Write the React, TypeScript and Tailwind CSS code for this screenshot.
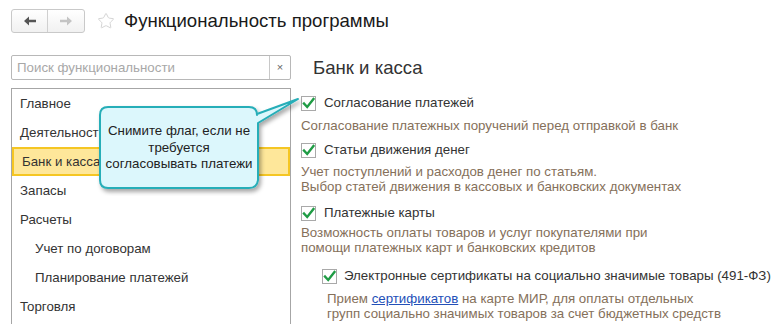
import { Star } from 'lucide-react';

const menu = [
    { title: 'Главное' },
    { title: 'Деятельность' },
    { title: 'Банк и касса', active: true },
    { title: 'Запасы' },
    { title: 'Расчеты' },
    { title: 'Учет по договорам', sub: true },
    { title: 'Планирование платежей', sub: true },
    { title: 'Торговля' },
];

function Check() {
    return (
        <span className="flex h-[15px] w-[15px] shrink-0 items-center justify-center border border-[#a9a9a9] bg-white">
            <svg width="13" height="13" viewBox="0 0 13 13">
                <path d="M2 6.5 L5.2 10 L11.5 2" fill="none" stroke="#1f9c45" strokeWidth="2.4" strokeLinecap="square" />
            </svg>
        </span>
    );
}

function Callout() {
    return (
        <div className="absolute left-[97px] top-[96px] h-[100px] w-[206px]">
            <svg width="206" height="100" className="absolute left-0 top-0">
                <defs>
                    <filter id="sh" x="-10%" y="-10%" width="130%" height="130%">
                        <feDropShadow dx="2" dy="3" stdDeviation="2" floodColor="#000" floodOpacity="0.35" />
                    </filter>
                </defs>
                <path
                    d="M11 11 H152 Q160 11 160 19 V18 L201 3 L161 27 V84 Q160 92 152 92 H11 Q3 92 3 84 V19 Q3 11 11 11 Z"
                    fill="#dcf7fc"
                    stroke="#27aeb8"
                    strokeWidth="2"
                    strokeLinejoin="round"
                    filter="url(#sh)"
                />
            </svg>
            <div className="absolute left-[3px] top-[27px] w-[158px] text-center text-[13.3px] leading-[16.5px] text-[#222]">
                Снимите флаг, если не<br />требуется<br />согласовывать платежи
            </div>
        </div>
    );
}

export default function App() {
    return (
        <div className="relative h-[324px] w-[778px] overflow-hidden bg-white font-['Liberation_Sans',Arial,sans-serif] text-[#333]">
            {/* шапка */}
            <div className="flex h-[42px] items-start pl-[11px] pt-[9px]">
                <div className="flex h-[24px] rounded-[3px] border border-[#c9c9c9] bg-gradient-to-b from-white to-[#f1f1f1]">
                    <button className="flex w-[36px] items-center justify-center border-r border-[#d0d0d0]">
                        <svg width="12" height="10" viewBox="0 0 12 10"><path d="M0 5 L5 0.5 V3.8 H12 V6.2 H5 V9.5 Z" fill="#555" /></svg>
                    </button>
                    <button className="flex w-[36px] items-center justify-center">
                        <svg width="12" height="10" viewBox="0 0 12 10"><path d="M12 5 L7 0.5 V3.8 H0 V6.2 H7 V9.5 Z" fill="#c4c4c4" /></svg>
                    </button>
                </div>
                <Star size={18} strokeWidth={1.2} className="ml-[12px] mt-[3px] text-[#cfcfcf]" />
                <h1 className="ml-[9px] text-[18.6px] leading-[24px] text-[#1a1a1a]">Функциональность программы</h1>
            </div>

            <div className="flex">
                {/* левая колонка */}
                <div className="ml-[11px] mt-[13px] w-[280px]">
                    <div className="flex h-[25px] rounded-[2px] border border-[#b8b8b8]">
                        <div className="flex flex-1 items-center pl-[5px] text-[13.3px] text-[#a8a8a8]">Поиск функциональности</div>
                        <div className="flex w-[21px] items-center justify-center border-l border-[#c8c8c8] text-[11px] text-[#666]">×</div>
                    </div>
                    <div className="mt-[8px] h-[260px] border-l border-r border-t border-[#a6a6a6]">
                        {menu.map((m) => (
                            <div
                                key={m.title}
                                className={`flex h-[29px] items-center text-[13.3px] ${m.sub ? 'pl-[23px]' : 'pl-[8px]'} ${
                                    m.active ? 'border-2 border-[#f5c623] bg-[#fee79a] pl-[6px]' : ''
                                }`}
                            >
                                {m.title}
                            </div>
                        ))}
                    </div>
                </div>

                {/* правая колонка */}
                <div className="ml-[10px] mt-[13px] flex-1">
                    <h2 className="ml-[12px] text-[18.6px] leading-[25px] text-[#333]">Банк и касса</h2>
                    <div className="mt-[13px] text-[13.3px]">
                        <div className="flex h-[20px] items-center gap-[8px]">
                            <Check />
                            <span>Согласование платежей</span>
                        </div>
                        <p className="mt-[5px] leading-[15px] text-[#85705a]">Согласование платежных поручений перед отправкой в банк</p>
                        <div className="mt-[7px] flex h-[20px] items-center gap-[8px]">
                            <Check />
                            <span>Статьи движения денег</span>
                        </div>
                        <p className="mt-[4px] leading-[15px] text-[#85705a]">
                            Учет поступлений и расходов денег по статьям.<br />Выбор статей движения в кассовых и банковских документах
                        </p>
                        <div className="mt-[9px] flex h-[20px] items-center gap-[8px]">
                            <Check />
                            <span>Платежные карты</span>
                        </div>
                        <p className="mt-[2px] leading-[15px] text-[#85705a]">
                            Возможность оплаты товаров и услуг покупателями при<br />помощи платежных карт и банковских кредитов
                        </p>
                        <div className="ml-[21px] mt-[11px] flex h-[20px] items-center gap-[7px]">
                            <Check />
                            <span className="whitespace-nowrap">Электронные сертификаты на социально значимые товары (491-ФЗ)</span>
                        </div>
                        <p className="ml-[26px] mt-[5px] leading-[15px] text-[#85705a]">
                            Прием <a className="text-[#2350b8] underline">сертификатов</a> на карте МИР, для оплаты отдельных<br />
                            групп социально значимых товаров за счет бюджетных средств
                        </p>
                    </div>
                </div>
            </div>

            <Callout />
        </div>
    );
}
